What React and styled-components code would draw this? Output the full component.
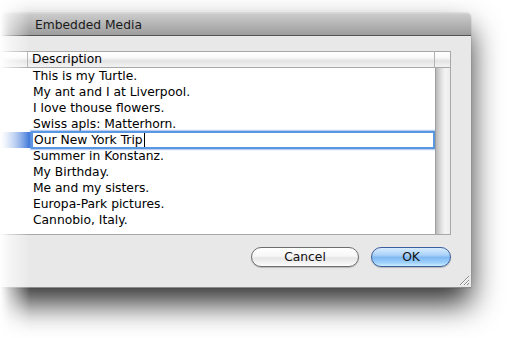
import React from 'react';
import styled, { createGlobalStyle } from 'styled-components';

const GlobalStyle = createGlobalStyle`
  html, body {
    margin: 0;
    padding: 0;
    background: #fff;
    overflow: hidden;
  }

  body {
    font-family: 'DejaVu Sans', 'Liberation Sans', sans-serif;
    font-size: 12.3px;
    color: #000;
  }
`;

const Page = styled.div`
  position: relative;
  width: 509px;
  height: 338px;
  padding-top: 13px;
  box-sizing: border-box;
  overflow: hidden;
`;

const Window = styled.div`
  width: 471px;
  border-radius: 0 5px 0 0;
  box-shadow: 0 16px 30px rgba(0, 0, 0, 0.8), 0 0 1px rgba(0, 0, 0, 0.5);
  background: #e8e8e8;
`;

const TitleBar = styled.div`
  height: 21px;
  display: flex;
  align-items: center;
  padding-left: 35px;
  border-radius: 0 5px 0 0;
  border-top: 1px solid #d4d4d4;
  border-bottom: 1px solid #545454;
  background: linear-gradient(#cbcbcb, #b4b4b4 50%, #9d9d9d);
  color: #1a1a1a;
`;

const Content = styled.div`
  position: relative;
  display: flex;
  flex-direction: column;
  padding: 15px 20px 20px 0;
  border-bottom: 1px solid #8c8c8c;
`;

const Table = styled.div`
  border: 1px solid #a8a8a8;
  border-left: none;
  background: #fff;
`;

const HeaderRow = styled.div`
  display: grid;
  grid-template-columns: 28px 1fr 15px;
  height: 15px;
  border-bottom: 1px solid #a8a8a8;
  background: linear-gradient(#fff, #fafafa 35%, #e3e3e3 60%, #f3f3f3);
`;

const HeaderCell = styled.div`
  display: flex;
  align-items: center;
  padding-left: ${p => (p.$label ? '4px' : '0')};
  border-right: ${p => (p.$last ? 'none' : '1px solid #b3b3b3')};
  line-height: 15px;
`;

const Body = styled.div`
  display: grid;
  grid-template-columns: 1fr 15px;
  height: 166px;
`;

const Rows = styled.div`
  display: flex;
  flex-direction: column;
`;

const Row = styled.div`
  height: 16px;
  display: flex;
  align-items: center;
  padding-left: ${p => (p.$editing ? '0' : '33px')};
  background: ${p =>
    p.$editing
      ? 'linear-gradient(to right, rgba(56,117,215,0.2), #3a74d8 30px)'
      : 'transparent'};
`;

const Editor = styled.div`
  flex: 1;
  height: 14px;
  margin-left: 31px;
  padding-left: 1px;
  display: flex;
  align-items: center;
  border: 2px solid #5b96e0;
  box-shadow: 0 0 1px 1px rgba(120, 165, 225, 0.55);
  background: #fff;
`;

const Caret = styled.span`
  display: inline-block;
  width: 1px;
  height: 14px;
  margin-left: 1px;
  background: #000;
`;

const ScrollTrack = styled.div`
  border-left: 1px solid #a0a0a0;
  background: linear-gradient(to right, #b9b9b9, #dedede 35%, #f4f4f4 65%, #ececec);
`;

const ButtonRow = styled.div`
  display: flex;
  justify-content: flex-end;
  gap: 12px;
  margin-top: 12px;
`;

const Button = styled.div`
  width: ${p => p.$width}px;
  height: 18px;
  display: flex;
  align-items: center;
  justify-content: center;
  border-radius: 10px;
  border: 1px solid ${p => (p.$primary ? '#3d5e9c' : '#6e6e6e')};
  background: ${p =>
    p.$primary
      ? 'linear-gradient(#d9ecfe, #a9d1f9 40%, #80b8f3 52%, #9ccffb 80%, #cdeeff)'
      : 'linear-gradient(#ffffff, #f7f7f7 45%, #e6e6e6 55%, #f4f4f4 85%, #ffffff)'};
  box-shadow: 0 1px 1px rgba(0, 0, 0, 0.2);
  color: #111;
`;

const Grip = styled.svg`
  position: absolute;
  right: 1px;
  bottom: 1px;
`;

const LeftFade = styled.div`
  position: absolute;
  top: 0;
  left: 0;
  bottom: 0;
  width: 30px;
  background: linear-gradient(to right, #fff, rgba(255, 255, 255, 0.6) 30%, rgba(255, 255, 255, 0));
  pointer-events: none;
`;

const descriptions = [
  'This is my Turtle.',
  'My ant and I at Liverpool.',
  'I love thouse flowers.',
  'Swiss apls: Matterhorn.',
  null,
  'Summer in Konstanz.',
  'My Birthday.',
  'Me and my sisters.',
  'Europa-Park pictures.',
  'Cannobio, Italy.',
];

export default function App() {
  return (
    <>
      <GlobalStyle />
      <Page>
        <Window>
          <TitleBar>Embedded Media</TitleBar>
          <Content>
            <Table>
              <HeaderRow>
                <HeaderCell />
                <HeaderCell $label>Description</HeaderCell>
                <HeaderCell $last />
              </HeaderRow>
              <Body>
                <Rows>
                  {descriptions.map((text, i) =>
                    text === null ? (
                      <Row key={i} $editing>
                        <Editor>
                          Our New York Trip
                          <Caret />
                        </Editor>
                      </Row>
                    ) : (
                      <Row key={i}>{text}</Row>
                    )
                  )}
                </Rows>
                <ScrollTrack />
              </Body>
            </Table>
            <ButtonRow>
              <Button $width={106}>Cancel</Button>
              <Button $width={78} $primary>OK</Button>
            </ButtonRow>
            <Grip width="13" height="13" viewBox="0 0 13 13">
              <path d="M12 3 L3 12 M12 7 L7 12 M12 10 L10 12" stroke="#8a8a8a" strokeWidth="1" />
              <path d="M12 4 L4 12 M12 8 L8 12" stroke="#fff" strokeWidth="1" />
            </Grip>
          </Content>
        </Window>
        <LeftFade />
      </Page>
    </>
  );
}
